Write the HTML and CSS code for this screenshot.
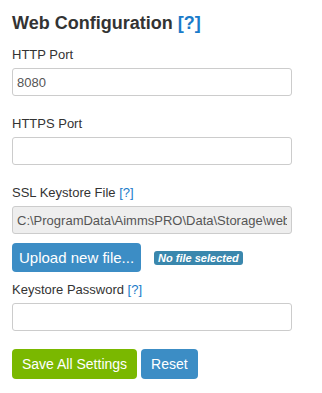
FILE: index.html
```html
<!DOCTYPE html>
<html lang="en">
<head>
    <meta charset="UTF-8">
    <meta name="viewport" content="width=device-width, initial-scale=1.0">
    <title>Web Configuration</title>
    <link rel="stylesheet" href="styles.css">
</head>
<body>
    <div class="config">
        <h3>Web Configuration <a href="#" class="help">[?]</a></h3>

        <form id="webConfig">
            <div class="form-group">
                <label for="httpPort">HTTP Port</label>
                <input type="text" id="httpPort" value="8080">
            </div>

            <div class="form-group">
                <label for="httpsPort">HTTPS Port</label>
                <input type="text" id="httpsPort">
            </div>

            <div class="form-group">
                <label for="keystoreFile">SSL Keystore File <a href="#" class="help">[?]</a></label>
                <input type="text" id="keystoreFile" value="C:\ProgramData\AimmsPRO\Data\Storage\webconfig\keystore.jks" readonly>
            </div>

            <div class="upload">
                <button type="button" class="btn btn-blue btn-upload">Upload new file...</button>
                <span class="badge">No file selected</span>
            </div>

            <div class="form-group">
                <label for="keystorePassword">Keystore Password <a href="#" class="help">[?]</a></label>
                <input type="password" id="keystorePassword">
            </div>

            <div class="actions">
                <button type="submit" class="btn btn-green">Save All Settings</button>
                <button type="reset" class="btn btn-blue">Reset</button>
            </div>
        </form>
    </div>
</body>
</html>
```

FILE: styles.css
```css
:root {
    --text: #333333;
    --link: #1a7bc9;
    --blue: #3c8dc5;
    --green: #7ab800;
    --border: #cccccc;
}

* {
    box-sizing: border-box;
    margin: 0;
    padding: 0;
}

body {
    font-family: "Liberation Sans", Arial, sans-serif;
    font-size: 13px;
    line-height: 18px;
    color: var(--text);
    background: #fff;
}

.config {
    width: 280px;
    margin: 11px 12px;
}

h3 {
    font-size: 18px;
    line-height: 24px;
    font-weight: bold;
    margin-bottom: 11px;
}

.help {
    color: var(--link);
    text-decoration: none;
}

.form-group {
    margin-bottom: 19px;
}

label {
    display: block;
    margin-bottom: 4px;
    font-weight: normal;
}

input {
    display: block;
    width: 100%;
    height: 28px;
    padding: 0 4px;
    font-family: inherit;
    font-size: 13px;
    color: #555;
    border: 1px solid var(--border);
    border-radius: 3px;
    background: #fff;
}

input[readonly] {
    background: #eeeeee;
}

input:focus {
    outline: none;
    border-color: var(--blue);
}

.upload {
    display: flex;
    align-items: center;
    gap: 13px;
    margin-top: -10px;
    margin-bottom: 9px;
}

.btn {
    border: none;
    border-radius: 4px;
    color: #fff;
    font-family: inherit;
    font-size: 14px;
    height: 30px;
    padding: 0 10px;
    cursor: pointer;
}

.btn-blue {
    background: var(--blue);
}

.btn-green {
    background: var(--green);
}

.btn-upload {
    font-size: 15px;
    height: 29px;
    padding: 0 7px;
}

.badge {
    background: #3a87ad;
    color: #fff;
    font-size: 11px;
    font-weight: bold;
    font-style: italic;
    line-height: 14px;
    padding: 0 4px;
    border-radius: 3px;
}

.actions {
    display: flex;
    gap: 4px;
    margin-top: -1px;
}
```
